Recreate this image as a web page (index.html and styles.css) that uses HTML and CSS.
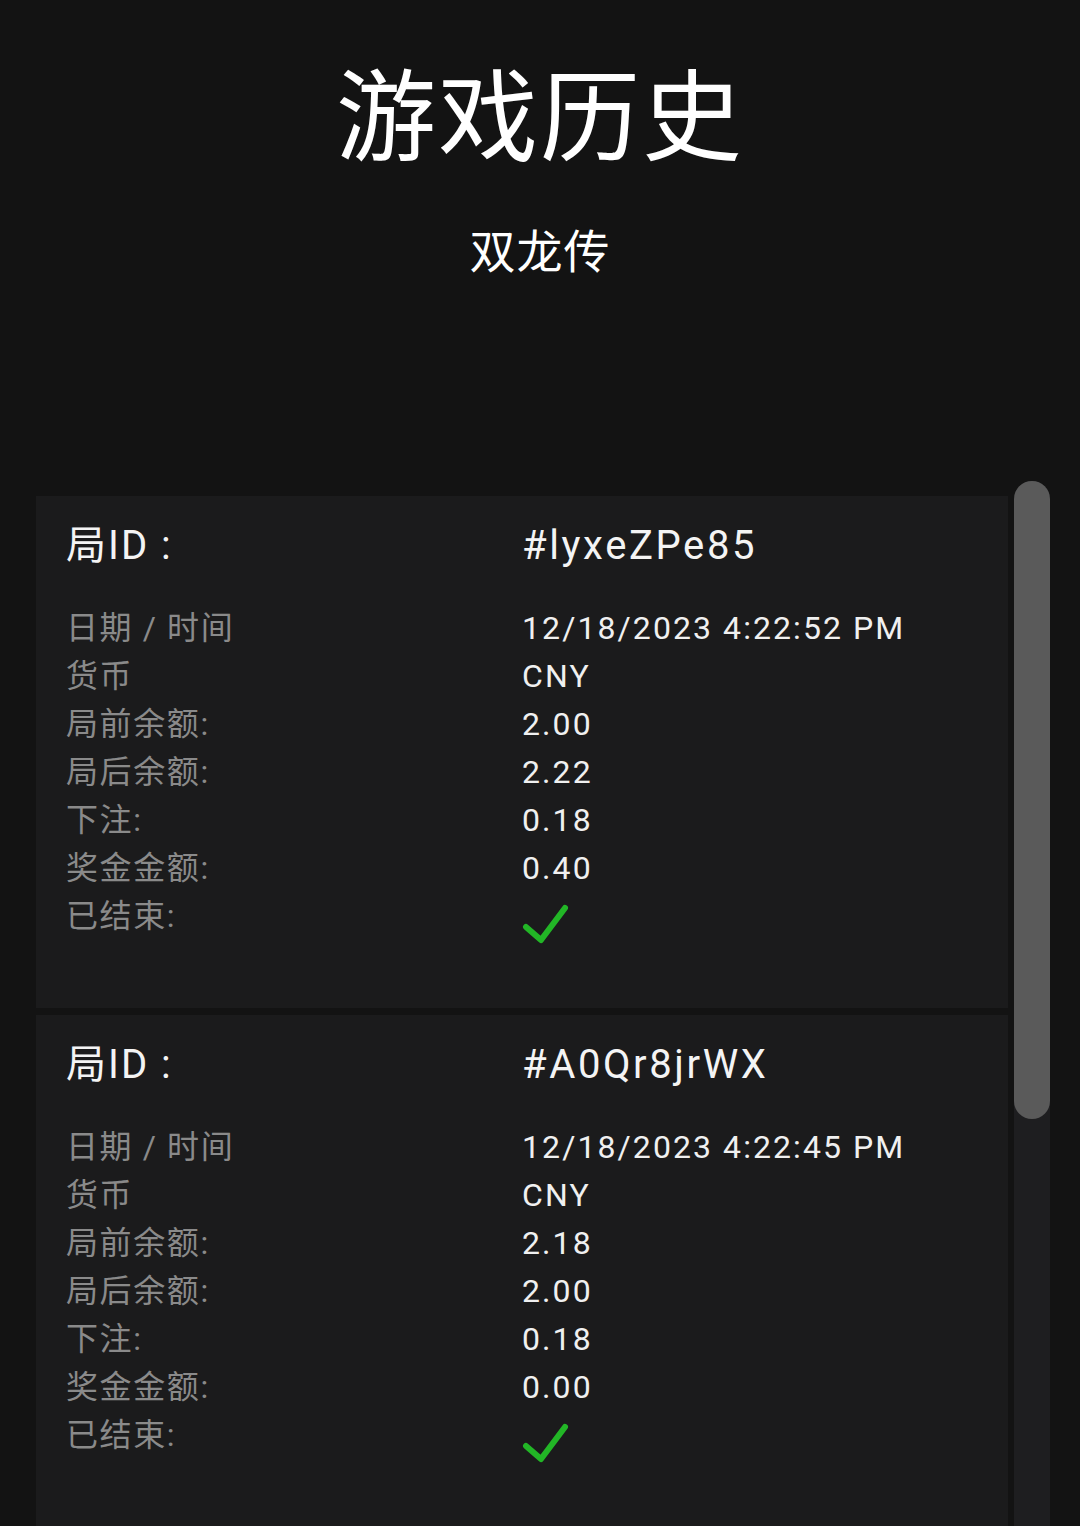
FILE: index.html
```html
<!DOCTYPE html>
<html>

<head>
    <title>游戏历史</title>
    <link rel="stylesheet" href="styles.css">
</head>

<body>
    <header class="page-head">
        <h1 class="page-title">游戏历史</h1>
        <p class="game-name">双龙传</p>
    </header>

    <main class="history">
        <section class="round-list">
            <!-- one card per round -->
            <div class="round-card">
                <div class="round-head">
                    <span>局ID :</span>
                    <span class="round-id">#lyxeZPe85</span>
                </div>
                <dl class="round-rows">
                    <dt>日期 / 时间</dt><dd>12/18/2023 4:22:52 PM</dd>
                    <dt>货币</dt><dd>CNY</dd>
                    <dt>局前余额:</dt><dd>2.00</dd>
                    <dt>局后余额:</dt><dd>2.22</dd>
                    <dt>下注:</dt><dd>0.18</dd>
                    <dt>奖金金额:</dt><dd>0.40</dd>
                    <dt>已结束:</dt>
                    <dd class="done">
                        <svg width="48" height="44" viewBox="0 0 48 44">
                            <path d="M4 25 L19 38 L43 6" fill="none" stroke="#22b626" stroke-width="6" stroke-linecap="round" stroke-linejoin="round" />
                        </svg>
                    </dd>
                </dl>
            </div>

            <div class="round-card">
                <div class="round-head">
                    <span>局ID :</span>
                    <span class="round-id">#A0Qr8jrWX</span>
                </div>
                <dl class="round-rows">
                    <dt>日期 / 时间</dt><dd>12/18/2023 4:22:45 PM</dd>
                    <dt>货币</dt><dd>CNY</dd>
                    <dt>局前余额:</dt><dd>2.18</dd>
                    <dt>局后余额:</dt><dd>2.00</dd>
                    <dt>下注:</dt><dd>0.18</dd>
                    <dt>奖金金额:</dt><dd>0.00</dd>
                    <dt>已结束:</dt>
                    <dd class="done">
                        <svg width="48" height="44" viewBox="0 0 48 44">
                            <path d="M4 25 L19 38 L43 6" fill="none" stroke="#22b626" stroke-width="6" stroke-linecap="round" stroke-linejoin="round" />
                        </svg>
                    </dd>
                </dl>
            </div>
        </section>

        <div class="scroll-track">
            <div class="scroll-thumb"></div>
        </div>
    </main>
</body>

</html>
```

FILE: styles.css
```css
html,
body {
    height: 100%;
}

body {
    margin: 0;
    background-color: #131313;
    color: #ffffff;
    font-family: Roboto, "Noto Sans CJK SC", sans-serif;
    overflow: hidden;
}

.page-head {
    text-align: center;
    padding-top: 59px;
}

.page-title {
    margin: 0;
    font-size: 100px;
    line-height: 120px;
    font-weight: 400;
    letter-spacing: 2px;
}

.game-name {
    margin: 43px 0 0;
    font-size: 46px;
    line-height: 60px;
    letter-spacing: 1px;
}

.history {
    display: flex;
    gap: 6px;
    margin-top: 199px;
    padding: 0 30px 0 36px;
}

.round-list {
    flex: 1;
    display: flex;
    flex-direction: column;
    gap: 7px;
    padding-top: 15px;
}

.round-card {
    background-color: #1b1b1c;
    padding: 20px 30px 60px;
}

.round-head {
    display: grid;
    grid-template-columns: 1fr 1fr;
    font-size: 40px;
    line-height: 60px;
    letter-spacing: 0.05em;
    color: #f4f4f4;
}

.round-head .round-id {
    letter-spacing: 0.065em;
}

.round-rows {
    display: grid;
    grid-template-columns: 1fr 1fr;
    margin: 28px 0 0;
    font-size: 32px;
    line-height: 48px;
    letter-spacing: 0.05em;
}

.round-rows dt {
    color: #8a8a8a;
}

.round-rows dd {
    margin: 0;
    color: #f0f0f0;
    letter-spacing: 0.065em;
}

.round-rows .done {
    height: 56px;
}

.round-rows .done svg {
    display: block;
    margin-top: 10px;
}

.scroll-track {
    width: 36px;
    height: 1100px;
    background-color: #1e1e20;
    border-radius: 18px 18px 0 0;
}

.scroll-thumb {
    height: 638px;
    background-color: #5a5a5a;
    border-radius: 18px;
}
```
